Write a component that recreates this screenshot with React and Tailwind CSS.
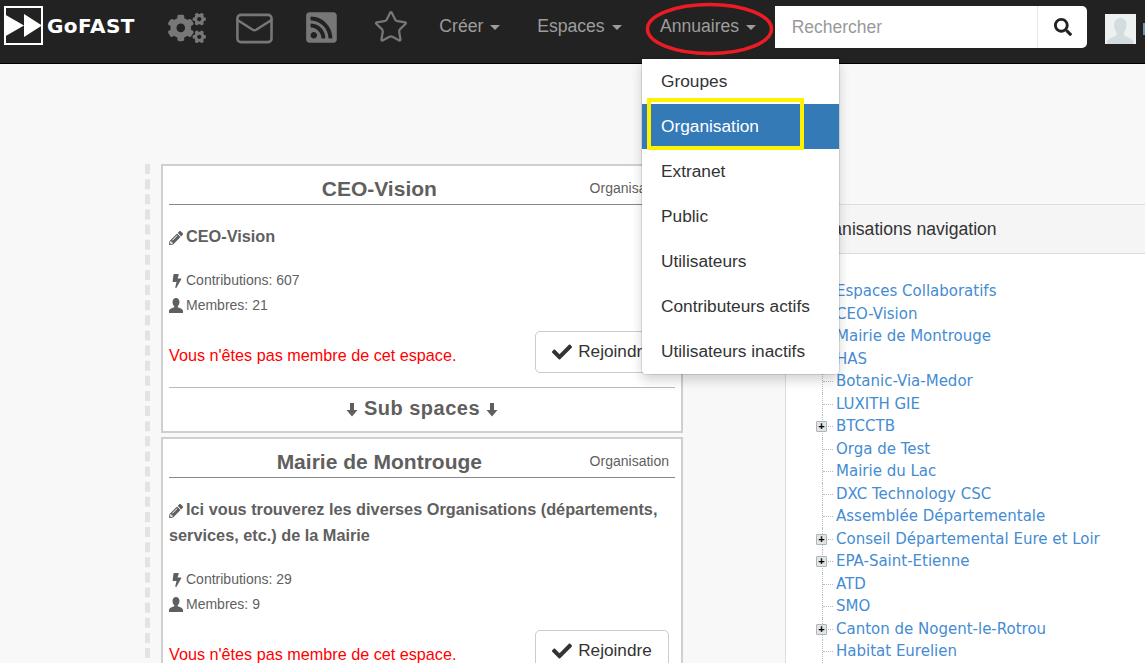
import React from 'react';
import { FaCogs, FaRssSquare, FaSearch, FaPencilAlt, FaBolt, FaCheck } from 'react-icons/fa';
import { Mail, Star } from 'lucide-react';

const menuItems = ['Groupes', 'Organisation', 'Extranet', 'Public', 'Utilisateurs', 'Contributeurs actifs', 'Utilisateurs inactifs'];

const treeItems = [
  { name: 'Espaces Collaboratifs', root: true },
  { name: 'CEO-Vision' },
  { name: 'Mairie de Montrouge' },
  { name: 'HAS' },
  { name: 'Botanic-Via-Medor' },
  { name: 'LUXITH GIE' },
  { name: 'BTCCTB', plus: true },
  { name: 'Orga de Test' },
  { name: 'Mairie du Lac' },
  { name: 'DXC Technology CSC' },
  { name: 'Assemblée Départementale' },
  { name: 'Conseil Départemental Eure et Loir', plus: true },
  { name: 'EPA-Saint-Etienne', plus: true },
  { name: 'ATD' },
  { name: 'SMO' },
  { name: 'Canton de Nogent-le-Rotrou', plus: true },
  { name: 'Habitat Eurelien' },
];

const ArrowDown = () => (
  <svg width="12" height="15" viewBox="0 0 12 15" className="inline-block fill-[#5f5f5f]">
    <path d="M4 1h4v7h3.500L6 14.500.5 8H4z" />
  </svg>
);

const UserIcon = () => (
  <svg width="14" height="15" viewBox="0 0 14 15" className="mr-[3px] fill-[#5f5f5f]">
    <path d="M7 0c2.200 0 3.500 1.700 3.500 4 0 1.800-.8 3.300-1.800 4.200v1c1.800.7 5.300 1.600 5.300 3.800v2H0v-2c0-2.200 3.500-3.100 5.300-3.800v-1C4.300 7.300 3.500 5.800 3.500 4 3.500 1.700 4.800 0 7 0z" />
  </svg>
);

const NavLink = ({ label, className }) => (
  <div className={`flex items-center text-[17.6px] text-[#9d9d9d] ${className}`}>
    {label}
    <span className="ml-[7px] mt-[2px] h-0 w-0 border-x-[5px] border-t-[5px] border-x-transparent border-t-[#9d9d9d]" />
  </div>
);

const Card = ({ title, description, contributions, members, children, className }) => (
  <div className={`border-2 border-[#cfcfcf] bg-white px-[6px] text-[#5f5f5f] ${className}`}>
    <div className="flex h-[39px] items-center border-b border-[#888] pt-[7px]">
      <div className="flex-1 text-center text-[21px] font-bold">{title}</div>
      <div className="pr-[6px] text-[14px]">Organisation</div>
    </div>
    <div className="mt-[18px] text-[16.3px] font-bold leading-[26px]">
      <FaPencilAlt className="mr-[3px] inline-block text-[14px]" />
      {description}
    </div>
    <div className="mt-[19px] flex h-[25px] items-center text-[14px]">
      <FaBolt className="ml-[1px] mr-[2px] text-[14px]" />
      Contributions: {contributions}
    </div>
    <div className="flex h-[25px] items-center text-[14px]">
      <UserIcon />
      Membres: {members}
    </div>
    <div className="mt-[13px] flex h-[42px] items-center justify-between pr-[6px]">
      <span className="pt-[6px] text-[16.2px] text-[#ff0000]">Vous n'êtes pas membre de cet espace.</span>
      <div className="flex h-[42px] w-[134px] items-center justify-center rounded-[5px] border border-[#ccc] bg-white text-[#333]">
        <FaCheck className="mr-[6px] text-[20px]" />
        <span className="text-[17.2px]">Rejoindre</span>
      </div>
    </div>
    {children}
  </div>
);

const TreeRow = ({ item }) => (
  <div className="relative flex h-[22.5px] items-center pl-[50px] text-[15px] text-[#458cd2] [font-family:'DejaVu_Sans',sans-serif]">
    {!item.root && (
      <>
        <span className="absolute left-[36px] top-0 h-full border-l border-dotted border-[#bbb]" />
        <span className="absolute left-[37px] top-[11px] w-[10px] border-t border-dotted border-[#bbb]" />
      </>
    )}
    {item.plus && (
      <span className="absolute left-[30px] top-[6px] flex h-[11px] w-[11px] items-center justify-center rounded-[1px] border border-[#a9b6c4] bg-[#e4e4e0]">
        <span className="text-[11px] font-bold leading-none text-black [font-family:'Liberation_Sans',sans-serif]">+</span>
      </span>
    )}
    {item.name}
  </div>
);

export default function App() {
  return (
    <div className="relative h-[663px] w-[1145px] overflow-hidden bg-[#f8f8f8] [font-family:'Liberation_Sans',Arial,sans-serif]">
      <nav className="flex h-[64px] items-center border-b border-black bg-[#222]">
        <div className="ml-[4px] mb-[13px] relative h-[39px] w-[39px] border-2 border-white">
          <svg width="38" height="23" viewBox="0 0 38 23" className="absolute -left-[2px] top-[6px] fill-white">
            <path d="M0 0l20 11.500L0 23zM20 0l18 11.500L20 23z" />
          </svg>
        </div>
        <div className="ml-[4px] mb-[11px] w-[121px] text-[20px] font-bold tracking-[0.5px] text-white [font-family:'DejaVu_Sans',sans-serif]">GoFAST</div>
        <FaCogs className="mb-[8px] text-[38px] text-[#777]" />
        <Mail size={41} strokeWidth={1.5} className="ml-[28px] mb-[6px] text-[#777]" />
        <FaRssSquare className="ml-[29px] mb-[8px] text-[35px] text-[#777]" />
        <Star size={36} strokeWidth={1.5} className="ml-[35px] mb-[10px] text-[#777]" />
        <NavLink label="Créer" className="ml-[30px] w-[98px] mb-[10px]" />
        <NavLink label="Espaces" className="w-[123px] mb-[10px]" />
        <NavLink label="Annuaires" className="w-[115px] mb-[10px]" />
        <div className="mb-[9px] flex h-[42px] w-[313px] rounded-r-[5px] bg-white">
          <div className="flex flex-1 items-center pl-[17px] text-[17.5px] text-[#999]">Rechercher</div>
          <div className="flex w-[50px] items-center justify-center border-l border-[#e6e6e6]">
            <FaSearch className="text-[18px] text-[#222]" />
          </div>
        </div>
        <div className="ml-[18px] mb-[6px] flex h-[30px] w-[31px] items-end justify-center overflow-hidden bg-[#eef1f1]">
          <svg width="27" height="27" viewBox="0 0 27 27" className="fill-[#d3dcdf]">
            <path d="M13.500 1c4 0 6 3 6 7 0 3-1 5-2.500 7v3c2 2 7 3 9.500 6v3H0v-3c2.500-3 7.500-4 9.500-6v-3C8 13 7 11 7 8c0-4 2.500-7 6.500-7z" />
          </svg>
        </div>
        <div className="ml-[7px] mb-[6px] h-[12px] w-[2px] bg-[#6f93b5]" />
      </nav>

      <main className="flex pl-[145px] pt-[100px]">
        <div className="box-content h-[600px] w-[522px] shrink-0 border-l-[5px] border-dashed border-[#e3e3e3] pl-[11px]">
          <Card title="CEO-Vision" description="CEO-Vision" contributions="607" members="21" className="h-[269px]">
            <div className="mt-[14px] border-t border-[#bbb] pt-[5px] text-center text-[20px] font-bold tracking-[0.5px]">
              <ArrowDown /> Sub spaces <ArrowDown />
            </div>
          </Card>
          <Card
            title="Mairie de Montrouge"
            description="Ici vous trouverez les diverses Organisations (départements, services, etc.) de la Mairie"
            contributions="29"
            members="9"
            className="mt-[4px]"
          />
        </div>
        <div className="ml-[102px] mt-[40px] h-[600px] flex-1 border-l border-[#ddd] bg-white">
          <div className="flex h-[50px] items-center border-y border-[#ddd] bg-[#f5f5f5] pl-[17px] text-[17.6px] text-[#333]">
            Organisations navigation
          </div>
          <div className="pt-[26px]">
            {treeItems.map((item) => (
              <TreeRow key={item.name} item={item} />
            ))}
          </div>
        </div>
      </main>

      {/* Menu déroulant Annuaires */}
      <div className="absolute left-[642px] top-[59px] w-[197px] rounded-b-[4px] bg-white shadow-[0_6px_12px_rgba(0,0,0,0.175)] ring-1 ring-black/10">
        {menuItems.map((item) => (
          <div
            key={item}
            className={`flex h-[45px] items-center pl-[19px] text-[17.3px] ${item === 'Organisation' ? 'bg-[#337ab7] text-white' : 'text-[#333]'}`}
          >
            {item}
          </div>
        ))}
      </div>

      {/* Annotations */}
      <svg width="132" height="60" viewBox="0 0 132 60" className="absolute left-[644px] top-[0px] fill-none stroke-[#ed1c24]">
        <ellipse cx="65.500" cy="29" rx="62" ry="24.500" strokeWidth="3.500" />
      </svg>
      <div className="absolute left-[647px] top-[98px] h-[52px] w-[157px] border-[4px] border-[#fff200]" />
    </div>
  );
}
